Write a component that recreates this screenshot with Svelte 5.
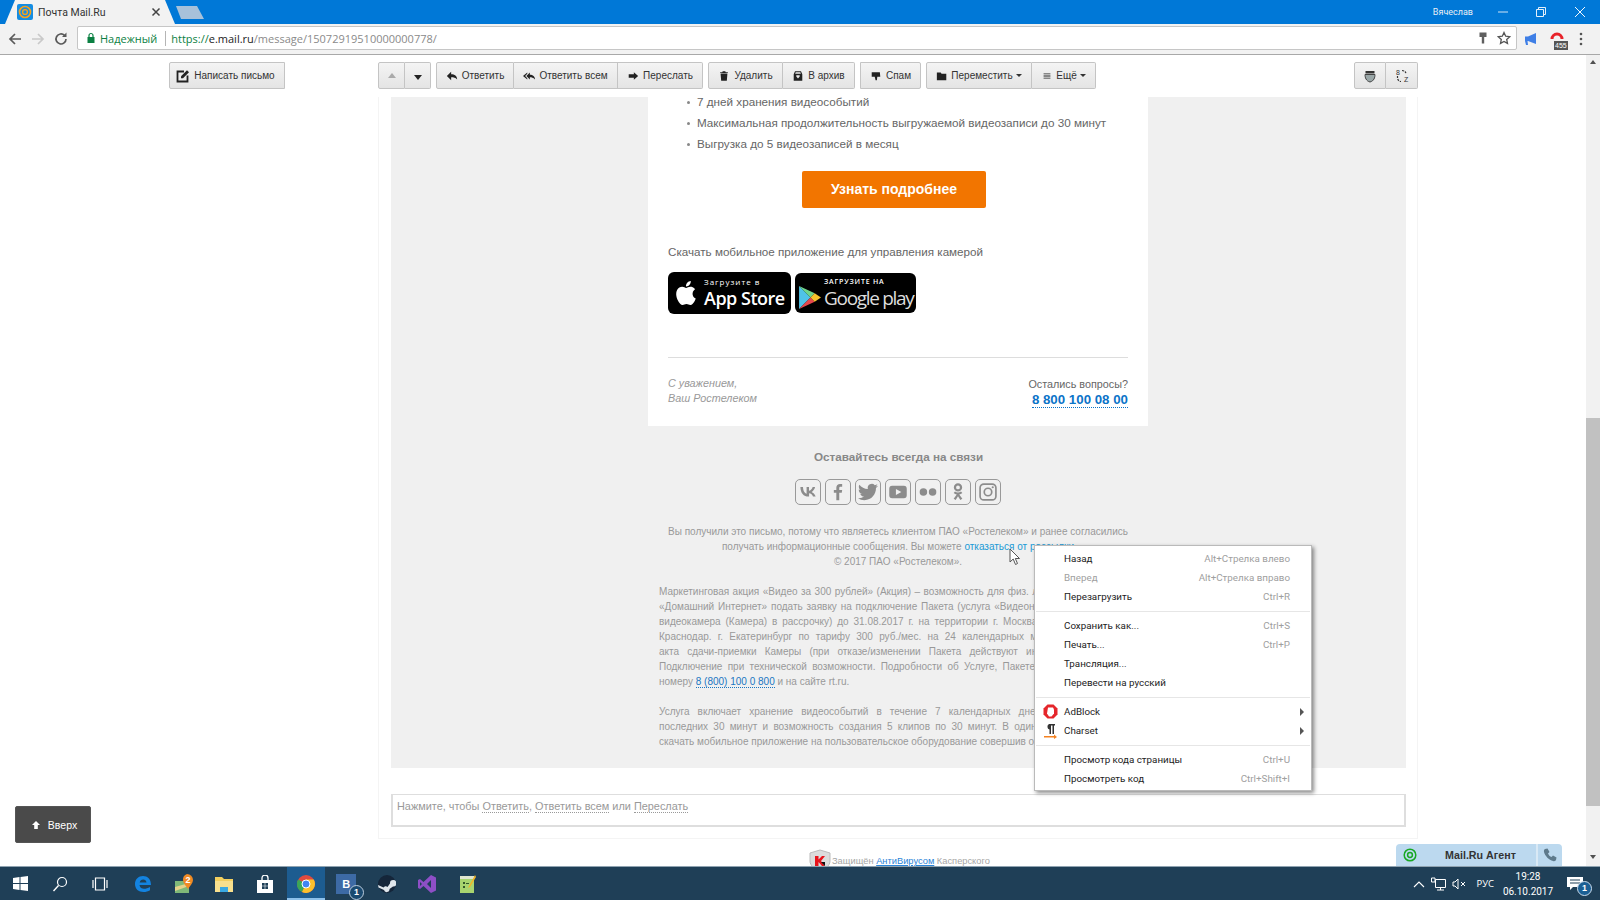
<script>
	const toolGroups = [
		[
			{ label: 'Ответить', icon: 'reply', w: 78 },
			{ label: 'Ответить всем', icon: 'replyAll', w: 104 },
			{ label: 'Переслать', icon: 'forward', w: 85 }
		],
		[
			{ label: 'Удалить', icon: 'trash', w: 75 },
			{ label: 'В архив', icon: 'archive', w: 72 }
		],
		[{ label: 'Спам', icon: 'spam', w: 61 }],
		[
			{ label: 'Переместить', icon: 'folder', w: 106, caret: true },
			{ label: 'Ещё', icon: 'lines', w: 64, caret: true }
		]
	];

	const icons = {
		reply: 'M6 2v3C10 5 13 7 13 11 11 9 9 8.500 6 8.500V12L1 7z',
		replyAll: 'M8 3v2.500c3.500 0 6 2 6 5.500-2-2-4-2.500-6-2.500V11L4 7zM5 3v1.500L2.500 7 5 9.500V11L0 7z',
		forward: 'M8 2.500 13 7 8 11.500V9H2V5h6z',
		trash: 'M3 4h8l-.7 8.500H3.700zM2.500 2.500H5L5.500 1.500h3l.5 1h2.500v1h-9z',
		archive: 'M3.500 1.500h7L12 5v7.500H2V5zM5 6v1.500L7 10l2-2.500V6zM4.300 2.500 3.700 4.500h6.600L9.700 2.500z',
		spam: 'M2 2.500h9.500L12 8H8.500L8 12H6.500L5.500 8H2z',
		folder: 'M1 3h4.500l1 1.500H12V12H1z',
		lines: 'M3 4h8v1H3zM3 6.500h8v1H3zM3 9h8v1H3z'
	};

	const socials = [
		{ d: 'M12.800 17.500C6.600 17.500 3 13.200 2.900 6h3.100c.1 5.300 2.400 7.500 4.300 8V6h2.900v4.600c1.800-.2 3.700-2.300 4.400-4.600h2.900c-.5 2.900-2.600 5-4.100 5.900 1.500.7 3.900 2.600 4.800 5.600h-3.200c-.7-2.100-2.400-3.800-4.700-4v4z' },
		{ d: 'M13.500 22v-9h3l.5-3.500h-3.500V7.300c0-1 .3-1.700 1.700-1.700H17V2.400c-.3 0-1.400-.1-2.600-.1-2.600 0-4.400 1.600-4.400 4.500v2.700H7V13h3v9z' },
		{ d: 'M23.953 4.570a10 10 0 01-2.825.775 4.958 4.958 0 002.163-2.723c-.951.555-2.005.959-3.127 1.184a4.920 4.920 0 00-8.384 4.482C7.690 8.095 4.067 6.130 1.640 3.162a4.822 4.822 0 00-.666 2.475c0 1.710.870 3.213 2.188 4.096a4.904 4.904 0 01-2.228-.616v.060a4.923 4.923 0 003.946 4.827 4.996 4.996 0 01-2.212.085 4.936 4.936 0 004.604 3.417 9.867 9.867 0 01-6.102 2.105c-.390 0-.779-.023-1.170-.067a13.995 13.995 0 007.557 2.209c9.053 0 13.998-7.496 13.998-13.985 0-.210 0-.420-.015-.630A9.935 9.935 0 0024 4.590z' },
		{ d: 'M5 4.500h14a3.500 3.500 0 013.500 3.500v8a3.500 3.500 0 01-3.500 3.500H5A3.500 3.500 0 011.500 16V8A3.500 3.500 0 015 4.500zM9.500 8.500v7l6.500-3.500z' },
		{ d: 'M6.500 7.500a4.500 4.500 0 110 9 4.500 4.500 0 010-9zM17.500 7.500a4.500 4.500 0 110 9 4.500 4.500 0 010-9z' },
		{ d: 'M12 1.500a5 5 0 110 10 5 5 0 010-10zM12 4.200a2.300 2.300 0 100 4.600 2.300 2.300 0 000-4.600zM6.800 13.200l1.600-1.900c2.200 1.700 5 1.700 7.200 0l1.600 1.900c-1.100.9-2.500 1.500-3.700 1.700l3.700 5.100-2.400 1.500L12 17.200 9.200 21.500l-2.400-1.500 3.700-5.100c-1.200-.2-2.600-.8-3.700-1.700z' },
		{ d: 'M7 1.500h10A5.500 5.500 0 0122.500 7v10a5.500 5.500 0 01-5.500 5.500H7A5.500 5.500 0 011.500 17V7A5.500 5.500 0 017 1.500zM7 3.500A3.500 3.500 0 003.500 7v10A3.500 3.500 0 007 20.500h10a3.500 3.500 0 003.500-3.500V7A3.500 3.500 0 0017 3.500zM12 6.500a5.500 5.500 0 110 11 5.500 5.500 0 010-11zM12 8.500a3.500 3.500 0 100 7 3.500 3.500 0 000-7zM17.700 5a1.300 1.300 0 110 2.600 1.300 1.300 0 010-2.600z' }
	];

	const legal = [
		'Маркетинговая акция «Видео за 300 рублей» (Акция) – возможность для физ. лиц, абонентов услуги',
		'«Домашний Интернет» подать заявку на подключение Пакета (услуга «Видеонаблюдение» и тариф)',
		'видеокамера (Камера) в рассрочку) до 31.08.2017 г. на территории г. Москва, г. Казань, г. Уфа, г.',
		'Краснодар. г. Екатеринбург по тарифу 300 руб./мес. на 24 календарных месяца с даты сдачи',
		'акта сдачи-приемки Камеры (при отказе/изменении Пакета действуют иные условия Акции).',
		'Подключение при технической возможности. Подробности об Услуге, Пакете, Акции по телефону'
	];

	const service = [
		'Услуга включает хранение видеособытий в течение 7 календарных дней, выгрузку записей',
		'последних 30 минут и возможность создания 5 клипов по 30 минут. В один календарный месяц'
	];

	const menu = [
		[
			{ label: 'Назад', key: 'Alt+Стрелка влево' },
			{ label: 'Вперед', key: 'Alt+Стрелка вправо', off: true },
			{ label: 'Перезагрузить', key: 'Ctrl+R' }
		],
		[
			{ label: 'Сохранить как...', key: 'Ctrl+S' },
			{ label: 'Печать...', key: 'Ctrl+P' },
			{ label: 'Трансляция...' },
			{ label: 'Перевести на русский' }
		],
		[
			{ label: 'AdBlock', sub: true, ext: 'adblock' },
			{ label: 'Charset', sub: true, ext: 'charset' }
		],
		[
			{ label: 'Просмотр кода страницы', key: 'Ctrl+U' },
			{ label: 'Просмотреть код', key: 'Ctrl+Shift+I' }
		]
	];
</script>

<div class="screen">
	<header class="titlebar">
		<div class="tab">
			<span class="favicon">
				<svg width="16" height="16" viewBox="0 0 16 16">
					<rect width="16" height="16" rx="2" fill="#168de2" />
					<circle cx="8" cy="8" r="5.500" fill="none" stroke="#f7a21b" stroke-width="1.600" />
					<circle cx="8" cy="8" r="2.400" fill="none" stroke="#f7a21b" stroke-width="1.400" />
				</svg>
			</span>
			<span class="tab-title">Почта Mail.Ru</span>
			<svg class="tab-close" width="10" height="10" viewBox="0 0 10 10">
				<path d="M1.500 1.500l7 7M8.500 1.500l-7 7" stroke="#444" stroke-width="1.500" />
			</svg>
		</div>
		<div class="newtab"></div>
		<div class="spacer"></div>
		<span class="profile">Вячеслав</span>
		<div class="winctl">
			<svg width="12" height="12" viewBox="0 0 12 12"><path d="M1 6h10" stroke="#cfe3f5" stroke-width="1" /></svg>
		</div>
		<div class="winctl">
			<svg width="12" height="12" viewBox="0 0 12 12"><path d="M1.500 3.500h7v7h-7zM3.500 3.500v-2h7v7h-2" fill="none" stroke="#e5f0fa" stroke-width="1" /></svg>
		</div>
		<div class="winctl">
			<svg width="12" height="12" viewBox="0 0 12 12"><path d="M1 1l10 10M11 1L1 11" stroke="#f2f7fc" stroke-width="1" /></svg>
		</div>
	</header>

	<div class="browserbar">
		<svg class="navbtn" width="16" height="16" viewBox="0 0 16 16"><path d="M14 8H3M8 3L3 8l5 5" fill="none" stroke="#5a5a5a" stroke-width="1.700" /></svg>
		<svg class="navbtn" width="16" height="16" viewBox="0 0 16 16"><path d="M2 8h11M8 3l5 5-5 5" fill="none" stroke="#c9c9c9" stroke-width="1.700" /></svg>
		<svg class="navbtn" width="16" height="16" viewBox="0 0 16 16"><path d="M13 8a5 5 0 11-1.500-3.600" fill="none" stroke="#5a5a5a" stroke-width="1.700" /><path d="M13.500 1.500v4.500H9z" fill="#5a5a5a" /></svg>
		<div class="omnibox">
			<svg width="10" height="12" viewBox="0 0 10 12"><path d="M3 5V3.500a2 2 0 014 0V5" fill="none" stroke="#0b8043" stroke-width="1.200" /><rect x="1.500" y="5" width="7" height="6" fill="#0b8043" /></svg>
			<span class="secure">Надежный</span>
			<span class="omnisep"></span>
			<span class="url"><span class="scheme">https://</span><span class="host">e.mail.ru</span>/message/15072919510000000778/</span>
			<span class="spacer"></span>
			<svg width="10" height="14" viewBox="0 0 10 14"><path d="M1.500 1.500h7v4.500H6.200v6.500H3.800V6H1.500z" fill="#5f5f5f" /></svg>
			<svg class="star" width="14" height="14" viewBox="0 0 14 14"><path d="M7 1.500l1.700 3.700 4 .5-3 2.700.8 4L7 10.500l-3.500 1.900.8-4-3-2.700 4-.5z" fill="none" stroke="#555" stroke-width="1.300" /></svg>
		</div>
		<svg class="ext-horn" width="14" height="14" viewBox="0 0 14 14"><path d="M1 4.500h3L12 1v11L4 9H3.500l.5 4H2L1 9z" fill="#3f7fe6" /></svg>
		<span class="ext-red">
			<svg width="14" height="12" viewBox="0 0 14 12"><path d="M2 11a5 5 0 1110 0" fill="none" stroke="#e8232a" stroke-width="3" /></svg>
			<span class="ext-count">455</span>
		</span>
		<svg class="kebab" width="4" height="14" viewBox="0 0 4 14"><circle cx="2" cy="2" r="1.300" fill="#555" /><circle cx="2" cy="7" r="1.300" fill="#555" /><circle cx="2" cy="12" r="1.300" fill="#555" /></svg>
	</div>

	<div class="viewport">
		<div class="page">
			<div class="actions">
				<button class="tbtn compose">
					<svg width="14" height="14" viewBox="0 0 14 14"><path d="M8 2.500H1.500v10h10V6.500" fill="none" stroke="#222" stroke-width="1.800" /><path d="M5 9.300V7.200L11 1.200 13 3.200 7 9.300z" fill="#222" /></svg>
					Написать письмо
				</button>
				<div class="bgroup nav-group">
					<button class="tbtn navarrow"><span class="tri up off"></span></button>
					<button class="tbtn navarrow"><span class="tri down"></span></button>
				</div>
				{#each toolGroups as group}
					<div class="bgroup">
						{#each group as b}
							<button class="tbtn" class:has-caret={b.caret} style="width:{b.w}px">
								<svg width="12" height="12" viewBox="0 0 14 14"><path d={icons[b.icon]} fill="#222" /></svg>
								{b.label}
								{#if b.caret}<span class="tri small"></span>{/if}
							</button>
						{/each}
					</div>
				{/each}
				<div class="spacer"></div>
				<div class="bgroup right-group">
					<button class="tbtn square">
						<svg width="14" height="14" viewBox="0 0 14 14"><path d="M2.500 2h9v2.500h-9z" fill="#333" /><path d="M2 5.500h10c0 3-1 6.500-5 7.500-4-1-5-4.500-5-7.500z" fill="#9aa7a8" stroke="#444" /></svg>
					</button>
					<button class="tbtn square">
						<svg width="16" height="16" viewBox="0 0 16 16"><path d="M8 2.500c2.500 0 4 1.500 4 3.500M3.500 8v2c0 2 2 3.500 3.500 3.500" fill="none" stroke="#333" stroke-width="1.200" stroke-dasharray="2 1" /><text x="2" y="6.500" class="az">8</text><text x="10" y="14" class="az">Z</text></svg>
					</button>
				</div>
			</div>

			<section class="thread">
				<div class="mail">
					<article class="card">
						<ul class="perks">
							<li>7 дней хранения видеособытий</li>
							<li>Максимальная продолжительность выгружаемой видеозаписи до 30 минут</li>
							<li>Выгрузка до 5 видеозаписей в месяц</li>
						</ul>
						<div class="cta">Узнать подробнее</div>
						<p class="apps-title">Скачать мобильное приложение для управления камерой</p>
						<div class="badges">
							<div class="badge appstore">
								<svg width="24" height="28" viewBox="0 0 24 24"><path d="M12.152 6.896c-.948 0-2.415-1.078-3.960-1.040-2.040.027-3.910 1.183-4.961 3.014-2.117 3.675-.546 9.103 1.519 12.090 1.013 1.454 2.208 3.090 3.792 3.039 1.520-.065 2.090-.987 3.935-.987 1.831 0 2.350.987 3.960.948 1.637-.026 2.676-1.480 3.676-2.948 1.156-1.688 1.636-3.325 1.662-3.415-.039-.013-3.182-1.221-3.220-4.857-.026-3.040 2.480-4.494 2.597-4.559-1.429-2.090-3.623-2.324-4.390-2.376-2-.156-3.675 1.090-4.610 1.090zM15.530 3.830c.843-1.012 1.400-2.427 1.245-3.830-1.207.052-2.662.805-3.532 1.818-.780.896-1.454 2.338-1.273 3.714 1.338.104 2.715-.688 3.559-1.701" fill="#fff" /></svg>
								<div class="badge-text">
									<span class="badge-small">Загрузите в</span>
									<span class="badge-big">App Store</span>
								</div>
							</div>
							<div class="badge gplay">
								<svg class="gplay-logo" width="23" height="25" viewBox="0 0 22 24">
									<path d="M1 1v22l11-11z" fill="#4fc3e8" />
									<path d="M1 1l11 11 4-4z" fill="#6fd58a" />
									<path d="M1 23l11-11 4 4z" fill="#e5484d" />
									<path d="M16 8l-4 4 4 4 6-4z" fill="#f6c32c" />
								</svg>
								<div class="badge-text">
									<span class="badge-small upper">Загрузите на</span>
									<span class="badge-big thin">Google play</span>
								</div>
							</div>
						</div>
						<div class="signoff">
							<div class="regards">С уважением,<br />Ваш Ростелеком</div>
							<div class="questions">
								Остались вопросы?
								<a class="phone" href="#top">8 800 100 08 00</a>
							</div>
						</div>
					</article>

					<h3 class="stay">Оставайтесь всегда на связи</h3>
					<div class="socials">
						{#each socials as s}
							<span class="social">
								<svg width="20" height="20" viewBox="0 0 24 24"><path d={s.d} fill="#8c8c8c" fill-rule="evenodd" /></svg>
							</span>
						{/each}
					</div>
					<p class="notice">
						Вы получили это письмо, потому что являетесь клиентом ПАО «Ростелеком» и ранее согласились<br />
						получать информационные сообщения. Вы можете <a href="#top">отказаться от рассылки</a><br />
						© 2017 ПАО «Ростелеком».
					</p>
					<div class="legal">
						{#each legal as line}<div class="jline">{line}</div>{/each}
						<div>номеру <a class="tel" href="#top">8 (800) 100 0 800</a> и на сайте rt.ru.</div>
					</div>
					<div class="legal second">
						{#each service as line}<div class="jline">{line}</div>{/each}
						<div>скачать мобильное приложение на пользовательское оборудование совершив оплату</div>
					</div>
				</div>
				<div class="quick-reply">
					Нажмите, чтобы <span class="dotted">Ответить</span>, <span class="dotted">Ответить всем</span> или <span class="dotted">Переслать</span>
				</div>
			</section>

			<footer class="protect">
				<svg width="24" height="22" viewBox="0 0 24 22">
					<path d="M12 1l10 3v8c0 5-5 8-10 10C7 20 2 17 2 12V4z" fill="#dcdcdc" stroke="#bbb" />
					<path d="M7 7h3.500v3.500L14 7h3l-4 5 4 5h-3l-3.500-4v4H7z" fill="#e8141c" />
					<path d="M13 13l4 4v-4z" fill="#111" />
				</svg>
				<span>Защищён <a href="#top">АнтиВирусом</a> Касперского</span>
			</footer>

			<button class="totop">
				<svg width="10" height="10" viewBox="0 0 10 10"><path d="M5 1l4 4H6.800v4H3.200V5H1z" fill="#fff" /></svg>
				Вверх
			</button>

			<div class="agent">
				<svg width="14" height="14" viewBox="0 0 14 14"><circle cx="7" cy="7" r="5.800" fill="none" stroke="#18a822" stroke-width="1.500" /><circle cx="7" cy="7" r="2.400" fill="none" stroke="#18a822" stroke-width="1.500" /></svg>
				<span class="agent-name">Mail.Ru Агент</span>
				<span class="agent-call">
					<svg width="14" height="14" viewBox="0 0 14 14"><path d="M2 1l2.500-.5L6.500 4 5 5.500C5.500 7 7 8.500 8.500 9L10 7.500 13.500 9.500 13 12c-.5 1-1.500 1.500-3 1C6 12 2 8 1 4 .8 2.500 1 1.500 2 1z" fill="#5e7a8c" /></svg>
				</span>
			</div>

			<div class="ctxmenu">
				{#each menu as section, i}
					{#if i > 0}<div class="ctxsep"></div>{/if}
					{#each section as item}
						<div class="ctxitem" class:off={item.off}>
							<span class="ctxicon">
								{#if item.ext === 'adblock'}
									<svg width="15" height="15" viewBox="0 0 15 15"><path d="M4.500 .5h6l4 4v6l-4 4h-6l-4-4v-6z" fill="#e5262b" /><path d="M5 3.500h5l1 2v4L8.500 12.500H6L4 9.500z" fill="#fff" /></svg>
								{:else if item.ext === 'charset'}
									<svg width="14" height="16" viewBox="0 0 14 16"><path d="M6 1h6v1.500h-1V11H9.500V2.500H8V11H6.500V6.500A3 3 0 016 1z" fill="#333" /><path d="M1 13h10v-1.500l3 2.500-3 2v-1.500H1z" fill="#f58220" /></svg>
								{/if}
							</span>
							<span class="ctxlabel">{item.label}</span>
							{#if item.key}<span class="ctxkey">{item.key}</span>{/if}
							{#if item.sub}<span class="ctxarrow"></span>{/if}
						</div>
					{/each}
				{/each}
			</div>

			<svg class="cursor" width="12" height="18" viewBox="0 0 12 18"><path d="M1 1v13l3.200-3 2.300 5.500 2-1L6.300 10.500H10.500z" fill="#fff" stroke="#555" /></svg>
		</div>

		<div class="scrollbar">
			<span class="tri up sb"></span>
			<div class="thumb"></div>
			<span class="tri down sb"></span>
		</div>
	</div>

	<footer class="taskbar">
		<div class="task"><svg width="15" height="15" viewBox="0 0 15 15"><path d="M0 2l6.500-1v6H0zM7.500 1L15 0v7H7.500zM0 8h6.500v6L0 13zM7.500 8H15v7l-7.500-1z" fill="#fff" /></svg></div>
		<div class="task"><svg width="16" height="16" viewBox="0 0 16 16"><circle cx="10" cy="6" r="4.500" fill="none" stroke="#fff" stroke-width="1.200" /><path d="M6.500 9.500L1.500 15" stroke="#fff" stroke-width="1.400" /></svg></div>
		<div class="task"><svg width="18" height="14" viewBox="0 0 18 14"><path d="M4.500 1h9v12h-9zM2 3v8M16 3v8" fill="none" stroke="#fff" stroke-width="1.200" /></svg></div>
		<div class="task"><svg width="18" height="18" viewBox="0 0 18 18"><path d="M1 9c0-5 3.500-8 8-8s8 3 8 9H5.500c.3 2.700 2.300 3.800 4.500 3.800 2 0 4-.6 6-1.800v3.200c-1.800 1-4 1.800-6.500 1.800C4.500 17 1 14 1 9zM5.700 7.500h6.800C12.300 5.500 11 4.500 9.200 4.500S6 5.500 5.700 7.500z" fill="#1383e0" fill-rule="evenodd" /></svg></div>
		<div class="task"><svg width="20" height="20" viewBox="0 0 20 20"><rect x="1" y="7" width="14" height="12" fill="#7fb878" /><path d="M1 13l14-4v3L1 17z" fill="#e5d38a" /><path d="M13 0a6 6 0 016 6c0 3-3 6-5 9-2-3-5-6-5-9a6 6 0 014-6z" fill="#f08a24" /><text x="11.500" y="9" class="mapn">2</text></svg></div>
		<div class="task"><svg width="18" height="16" viewBox="0 0 18 16"><path d="M0 1h7l2 2h9v13H0z" fill="#f3cf5f" /><path d="M0 5h18v11H0z" fill="#f8e08e" /><path d="M5 11h8v5H5z" fill="#3aa9e2" /></svg></div>
		<div class="task"><svg width="18" height="18" viewBox="0 0 18 18"><path d="M1 5h16v13H1z" fill="#fff" /><path d="M6 5V3a3 3 0 016 0v2" fill="none" stroke="#fff" stroke-width="1.300" /><path d="M6 8h2.700v2.700H6zM9.300 8H12v2.700H9.300zM6 11.300h2.700V14H6zM9.300 11.300H12V14H9.300z" fill="#1e3f57" /></svg></div>
		<div class="task active">
			<svg width="18" height="18" viewBox="0 0 18 18">
				<circle cx="9" cy="9" r="9" fill="#e04a3f" />
				<path d="M9 9L1.200 4.500A9 9 0 000 9a9 9 0 005 8z" fill="#3aa757" />
				<path d="M9 9l-4 8A9 9 0 0018 9c0-1.600-.4-3-1.200-4.500H9z" fill="#fbc02d" />
				<circle cx="9" cy="9" r="4" fill="#4285f4" stroke="#fff" />
			</svg>
		</div>
		<div class="task tile">
			<span class="tile-b">В</span>
			<span class="tile-n">1</span>
		</div>
		<div class="task"><svg width="18" height="18" viewBox="0 0 18 18"><circle cx="9" cy="9" r="9" fill="#15263a" /><path d="M0 10l5.500 2.500a2.500 2.500 0 014-.5l2.500-3.500a3.200 3.200 0 113 3L11.500 14A2.800 2.800 0 016 15L.5 12.500z" fill="#dfe6ec" /></svg></div>
		<div class="task"><svg width="18" height="18" viewBox="0 0 18 18"><path d="M13 0l5 2.500v13L13 18 5.500 11 2 14l-2-1V5l2-1 3.500 3zM13 5L9 9l4 4zM2 7v4l2-2z" fill="#8e4fc6" fill-rule="evenodd" /></svg></div>
		<div class="task"><svg width="16" height="20" viewBox="0 0 16 20"><rect y="2" width="14" height="17" fill="#a8d46f" /><rect y="2" width="14" height="3" fill="#dfe6d0" /><path d="M3 8h2v2H3zM3 12h2v2H3zM6 9h3v1H6z" fill="#33572a" /><path d="M15 1L9 12l-1 2 2-1L16 3z" fill="#f0b429" /></svg></div>
		<div class="spacer"></div>
		<svg class="tray" width="12" height="8" viewBox="0 0 12 8"><path d="M1 7l5-5 5 5" fill="none" stroke="#fff" stroke-width="1.100" /></svg>
		<svg class="tray" width="15" height="14" viewBox="0 0 15 14"><path d="M4.500 2.500h10v8h-10zM9.500 10.500V13M6 13h7" fill="none" stroke="#fff" /><path d="M.5 1h3.500v4H.5z" fill="#1e3f57" stroke="#fff" /></svg>
		<svg class="tray" width="14" height="12" viewBox="0 0 14 12"><path d="M1 4h2l3-3v10L3 8H1z" fill="none" stroke="#fff" /><path d="M9 4l4 4M13 4l-4 4" stroke="#fff" /></svg>
		<span class="lang">РУС</span>
		<div class="clock"><span>19:28</span><span>06.10.2017</span></div>
		<span class="notify">
			<svg width="16" height="14" viewBox="0 0 16 14"><path d="M0 0h16v10H6l-3 3v-3H0z" fill="#fff" /><path d="M3 3h10M3 6h10" stroke="#1e3f57" /></svg>
			<span class="notify-n">1</span>
		</span>
	</footer>
</div>

<style>
	:global(body) {
		margin: 0;
		background: #fff;
	}

	.screen {
		width: 1600px;
		height: 900px;
		display: flex;
		flex-direction: column;
		overflow: hidden;
		font-family: 'Liberation Sans', Arial, sans-serif;
		font-size: 12px;
		color: #333;
	}

	.spacer {
		flex: 1;
	}

	/* window title + tab strip */
	.titlebar {
		height: 24px;
		flex: none;
		display: flex;
		align-items: flex-end;
		background: #0078d7;
		color: #fff;
	}

	.tab {
		width: 176px;
		height: 24px;
		box-sizing: border-box;
		padding: 0 11px 0 17px;
		display: flex;
		align-items: center;
		background: #f2f2f2;
		clip-path: polygon(5px 100%, 15px 0, 165px 0, 175px 100%);
		font-family: 'Roboto', sans-serif;
		font-size: 10.500px;
		color: #333;
	}

	.favicon {
		display: flex;
		margin-right: 5px;
	}

	.tab-title {
		flex: 1;
	}

	.tab-close {
		margin-right: 4px;
	}

	.newtab {
		width: 28px;
		height: 13px;
		margin: 0 0 5px 0;
		background: #a7c1da;
		clip-path: polygon(5px 100%, 0 0, 21px 0, 28px 100%);
	}

	.profile {
		align-self: center;
		margin-right: 11px;
		font-family: 'Roboto', sans-serif;
		font-size: 9px;
		color: #e8eef4;
	}

	.winctl {
		width: 38px;
		height: 24px;
		display: flex;
		align-items: center;
		justify-content: center;
	}

	.winctl:last-child {
		width: 40px;
	}

	/* address bar */
	.browserbar {
		height: 31px;
		flex: none;
		box-sizing: border-box;
		display: flex;
		align-items: center;
		padding: 0 9px 0 7px;
		background: #f2f2f2;
		border-bottom: 1px solid #a8a8a8;
	}

	.navbtn {
		margin-right: 7px;
		flex: none;
	}

	.navbtn:nth-child(3) {
		margin-right: 8px;
	}

	.omnibox {
		width: 1440px;
		height: 24px;
		flex: none;
		box-sizing: border-box;
		display: flex;
		align-items: center;
		padding: 0 5px 0 8px;
		margin-top: -2px;
		background: #fff;
		border: 1px solid #c6c6c6;
		border-radius: 2px;
		font-family: 'Open Sans', sans-serif;
		font-size: 11px;
		color: #8a8a8a;
	}

	.secure {
		margin-left: 4px;
		color: #0b8043;
	}

	.omnisep {
		width: 1px;
		height: 15px;
		margin: 0 5px 0 8px;
		background: #b5b5b5;
	}

	.scheme {
		color: #0b8043;
	}

	.host {
		color: #222;
	}

	.star {
		margin-left: 9px;
	}

	.ext-horn {
		margin-left: 7px;
		flex: none;
	}

	.ext-red {
		position: relative;
		margin-left: 12px;
		width: 18px;
		height: 22px;
		flex: none;
		margin-top: -1px;
	}

	.ext-count {
		position: absolute;
		left: 4px;
		top: 13px;
		padding: 0 1px;
		background: #555;
		color: #fff;
		font-size: 7px;
		line-height: 9px;
	}

	.kebab {
		margin-left: 11px;
		flex: none;
	}

	/* page under the browser chrome */
	.viewport {
		flex: 1;
		min-height: 0;
		display: flex;
	}

	.page {
		position: relative;
		width: 1586px;
		flex: none;
		overflow: hidden;
		display: flex;
		flex-direction: column;
	}

	.actions {
		height: 42px;
		flex: none;
		box-sizing: border-box;
		padding: 7px 168px 0 169px;
		display: flex;
		align-items: flex-start;
		gap: 5px;
	}

	.tbtn {
		height: 27px;
		box-sizing: border-box;
		padding: 0;
		display: inline-flex;
		align-items: center;
		justify-content: center;
		gap: 4px;
		background: linear-gradient(#f4f4f4, #e4e4e4);
		border: 1px solid #c4c4c4;
		border-left-width: 0;
		font-family: 'Liberation Sans', Arial, sans-serif;
		font-size: 10px;
		color: #333;
	}

	.tbtn:first-child {
		border-left-width: 1px;
		border-radius: 2px 0 0 2px;
	}

	.tbtn:last-child {
		border-radius: 0 2px 2px 0;
	}

	.tbtn.has-caret {
		gap: 3px;
	}

	.bgroup {
		display: flex;
	}

	.compose {
		width: 116px;
		margin-right: 88px;
		padding-right: 3px;
		border-left-width: 1px;
		border-radius: 2px;
	}

	.navarrow {
		width: 26px;
	}

	.navarrow:first-child {
		width: 27px;
	}

	.square {
		width: 32px;
	}

	.az {
		font-size: 7px;
		fill: #333;
	}

	.tri {
		display: inline-block;
		width: 0;
		height: 0;
		border-left: 4px solid transparent;
		border-right: 4px solid transparent;
	}

	.tri.up {
		border-bottom: 5px solid #333;
	}

	.tri.up.off {
		border-bottom-color: #aaa;
	}

	.tri.down {
		border-top: 5px solid #222;
		margin-top: 3px;
	}

	.tri.small {
		border-left-width: 3px;
		border-right-width: 3px;
		border-top: 3px solid #333;
	}

	.thread {
		width: 1040px;
		margin-left: 378px;
		flex: none;
		box-sizing: border-box;
		padding: 0 11px 11px 12px;
		border: 1px solid #f4f4f4;
		border-top: none;
		background: #fff;
	}

	.mail {
		height: 671px;
		box-sizing: border-box;
		overflow: hidden;
		background: #f0f0f0;
		color: #999;
	}

	.card {
		width: 500px;
		height: 329px;
		margin-left: 257px;
		box-sizing: border-box;
		overflow: hidden;
		padding: 0 20px;
		background: #fff;
		color: #666;
	}

	.perks {
		margin: -6px 0 0;
		padding: 0 0 0 29px;
		list-style: none;
		line-height: 21px;
		font-size: 11.700px;
	}

	.perks li {
		position: relative;
	}

	.perks li::before {
		content: '';
		position: absolute;
		left: -10px;
		top: 10px;
		width: 3px;
		height: 3px;
		border-radius: 50%;
		background: #888;
	}

	.cta {
		width: 184px;
		height: 37px;
		margin: 17px 0 0 134px;
		border-radius: 2px;
		background: #f27500;
		color: #fff;
		font-size: 14px;
		font-weight: bold;
		line-height: 36px;
		text-align: center;
	}

	.apps-title {
		margin: 36px 0 0;
		font-size: 11.650px;
		line-height: 16px;
	}

	.badges {
		margin-top: 12px;
		display: flex;
		align-items: center;
		gap: 4px;
	}

	.badge {
		height: 42px;
		box-sizing: border-box;
		display: flex;
		align-items: center;
		gap: 6px;
		padding-left: 6px;
		background: #000;
		border-radius: 6px;
		color: #fff;
	}

	.appstore {
		width: 123px;
	}

	.gplay {
		width: 121px;
		height: 40px;
		padding-left: 3px;
		gap: 3px;
	}

	.gplay-logo {
		margin-top: 8px;
		flex: none;
	}

	.badge-text {
		display: flex;
		flex-direction: column;
	}

	.badge-small {
		font-family: 'Open Sans', sans-serif;
		font-size: 8px;
		line-height: 10px;
		letter-spacing: 1px;
	}

	.badge-small.upper {
		text-transform: uppercase;
		font-size: 7px;
		font-weight: 600;
		letter-spacing: 0.8px;
		margin-bottom: 0;
	}

	.badge-big {
		font-family: 'Open Sans', sans-serif;
		font-size: 18px;
		line-height: 22px;
		font-weight: 600;
		letter-spacing: -0.5px;
		white-space: nowrap;
	}

	.badge-big.thin {
		font-size: 19px;
		font-weight: 400;
		letter-spacing: -1.300px;
		color: #ddd;
	}

	.signoff {
		margin-top: 43px;
		padding-top: 18px;
		border-top: 1px solid #ddd;
		display: flex;
		justify-content: space-between;
	}

	.regards {
		font-size: 10.800px;
		font-style: italic;
		line-height: 15px;
		color: #999;
	}

	.questions {
		display: flex;
		flex-direction: column;
		align-items: flex-end;
		font-size: 10.800px;
		line-height: 15px;
		margin-top: 1px;
	}

	.phone {
		color: #0b73c8;
		font-size: 13.300px;
		font-weight: bold;
		line-height: 15px;
		text-decoration: none;
		border-bottom: 1px dotted #0b73c8;
	}

	.stay {
		margin: 23px 0 0;
		text-align: center;
		font-size: 11.700px;
		font-weight: bold;
		line-height: 16px;
		color: #888;
	}

	.socials {
		margin-top: 14px;
		padding-right: 2px;
		display: flex;
		justify-content: center;
		gap: 4px;
	}

	.social {
		width: 26px;
		height: 26px;
		box-sizing: border-box;
		display: flex;
		align-items: center;
		justify-content: center;
		border: 1px solid #999;
		border-radius: 5px;
	}

	.notice {
		width: 500px;
		margin: 19px 0 0 257px;
		font-size: 10px;
		line-height: 15px;
		text-align: center;
		white-space: nowrap;
	}

	.notice a {
		color: #1a9ad6;
		text-decoration: none;
	}

	.legal {
		width: 479px;
		margin: 15px 0 0 268px;
		font-size: 10px;
		line-height: 15px;
		white-space: nowrap;
	}

	.jline {
		text-align: justify;
		text-align-last: justify;
		white-space: normal;
	}

	.tel {
		color: #1a76c2;
		text-decoration: none;
		border-bottom: 1px dotted #1a76c2;
	}

	.quick-reply {
		height: 33px;
		margin-top: 26px;
		box-sizing: border-box;
		padding-left: 4px;
		border: 2px solid #dedede;
		border-top-width: 1px;
		font-size: 10.900px;
		line-height: 23px;
		color: #999;
	}

	.dotted {
		border-bottom: 1px dotted #999;
	}

	.protect {
		margin: 10px 0 0 808px;
		display: flex;
		align-items: flex-start;
		font-size: 9.300px;
		line-height: 12px;
		color: #a6a6a6;
		white-space: nowrap;
	}

	.protect span {
		margin-top: 6px;
	}

	.protect a {
		color: #2a84d8;
	}

	.totop {
		position: absolute;
		left: 15px;
		top: 751px;
		width: 76px;
		height: 37px;
		display: flex;
		align-items: center;
		justify-content: center;
		gap: 7px;
		padding: 0 0 0 2px;
		background: #4a4a4a;
		border: 1px solid #555;
		border-radius: 2px;
		color: #fff;
		font-family: 'Liberation Sans', Arial, sans-serif;
		font-size: 10.500px;
	}

	.agent {
		position: absolute;
		left: 1396px;
		bottom: 0;
		width: 166px;
		height: 22px;
		box-sizing: border-box;
		display: flex;
		align-items: center;
		padding-left: 7px;
		background: #bcd9ef;
		border-radius: 4px 4px 0 0;
		font-size: 10.700px;
		font-weight: bold;
		color: #333;
	}

	.agent-name {
		flex: 1;
		padding-left: 8px;
		text-align: center;
	}

	.agent-call {
		width: 26px;
		height: 22px;
		box-sizing: border-box;
		display: flex;
		align-items: center;
		justify-content: center;
		border-left: 2px solid #d9e9f5;
	}

	.ctxmenu {
		position: absolute;
		left: 1034px;
		top: 490px;
		width: 278px;
		box-sizing: border-box;
		padding: 3px 0 2px;
		background: #fff;
		border: 1px solid #bababa;
		box-shadow: 2px 2px 4px rgba(0, 0, 0, 0.45);
		font-family: 'Roboto', sans-serif;
		font-size: 9.800px;
		color: #222;
	}

	.ctxitem {
		height: 19px;
		display: flex;
		align-items: center;
		white-space: nowrap;
	}

	.ctxitem.off {
		color: #a0a0a0;
	}

	.ctxicon {
		width: 29px;
		padding-left: 8px;
		box-sizing: border-box;
		display: flex;
		align-items: center;
		flex: none;
	}

	.ctxlabel {
		flex: 1;
	}

	.ctxkey {
		margin-right: 21px;
		color: #a0a0a0;
	}

	.ctxarrow {
		width: 0;
		height: 0;
		margin-right: 7px;
		border-top: 4px solid transparent;
		border-bottom: 4px solid transparent;
		border-left: 4px solid #555;
	}

	.ctxsep {
		height: 1px;
		margin: 5px 1px 4px;
		background: #e6e6e6;
	}

	.cursor {
		position: absolute;
		left: 1009px;
		top: 493px;
	}

	.scrollbar {
		width: 14px;
		flex: none;
		box-sizing: border-box;
		padding: 5px 0;
		position: relative;
		display: flex;
		flex-direction: column;
		align-items: center;
		background: #f1f1f1;
	}

	.tri.sb {
		border-left-width: 3px;
		border-right-width: 3px;
		margin: 0;
	}

	.tri.up.sb {
		border-bottom-width: 4px;
		border-bottom-color: #505050;
	}

	.tri.down.sb {
		border-top-width: 4px;
		border-top-color: #505050;
	}

	.thumb {
		width: 14px;
		height: 388px;
		margin: 354px 0 0;
		flex: none;
		background: #c1c1c1;
	}

	.scrollbar .tri.down {
		margin-top: auto;
		margin-bottom: 2px;
	}

	/* windows taskbar */
	.taskbar {
		height: 34px;
		flex: none;
		box-sizing: border-box;
		display: flex;
		align-items: center;
		background: #1f3f57;
		border-top: 1px solid #8fa3b1;
		color: #fff;
	}

	.task {
		width: 40.600px;
		height: 33px;
		flex: none;
		display: flex;
		align-items: center;
		justify-content: center;
	}

	.task:nth-child(-n + 3) {
		width: 40px;
	}

	.task:nth-child(4) {
		margin-left: 3px;
	}

	.task.active {
		width: 38px;
		margin: 0 1.300px;
		background: #1d5c90;
		box-shadow: inset 0 -2px 0 #8dc0ea;
	}

	.tile {
		position: relative;
	}

	.tile-b {
		width: 20px;
		height: 20px;
		background: #3d6aa5;
		font-size: 11px;
		font-weight: bold;
		line-height: 20px;
		text-align: center;
	}

	.tile-n {
		position: absolute;
		left: 23px;
		top: 18px;
		width: 13px;
		height: 13px;
		background: #1b4a70;
		border: 1px solid #bcd;
		border-radius: 50%;
		font-size: 9px;
		font-weight: bold;
		line-height: 13px;
		text-align: center;
	}

	.mapn {
		font-size: 9px;
		font-weight: bold;
		fill: #fff;
	}

	.tray {
		margin-right: 6px;
		flex: none;
	}

	.lang {
		margin: 0 1px 0 4px;
		font-family: 'Open Sans', sans-serif;
		font-size: 9.500px;
	}

	.clock {
		width: 66px;
		display: flex;
		flex-direction: column;
		align-items: center;
		font-family: 'Roboto', sans-serif;
		font-size: 10px;
		line-height: 15px;
	}

	.notify {
		position: relative;
		width: 39px;
		display: flex;
		justify-content: center;
		padding-right: 12px;
		box-sizing: border-box;
	}

	.notify-n {
		position: absolute;
		left: 16px;
		top: 4px;
		width: 13px;
		height: 13px;
		background: #1b5f94;
		border: 1px solid #cde;
		border-radius: 50%;
		font-size: 9px;
		font-weight: bold;
		line-height: 13px;
		text-align: center;
	}
</style>
